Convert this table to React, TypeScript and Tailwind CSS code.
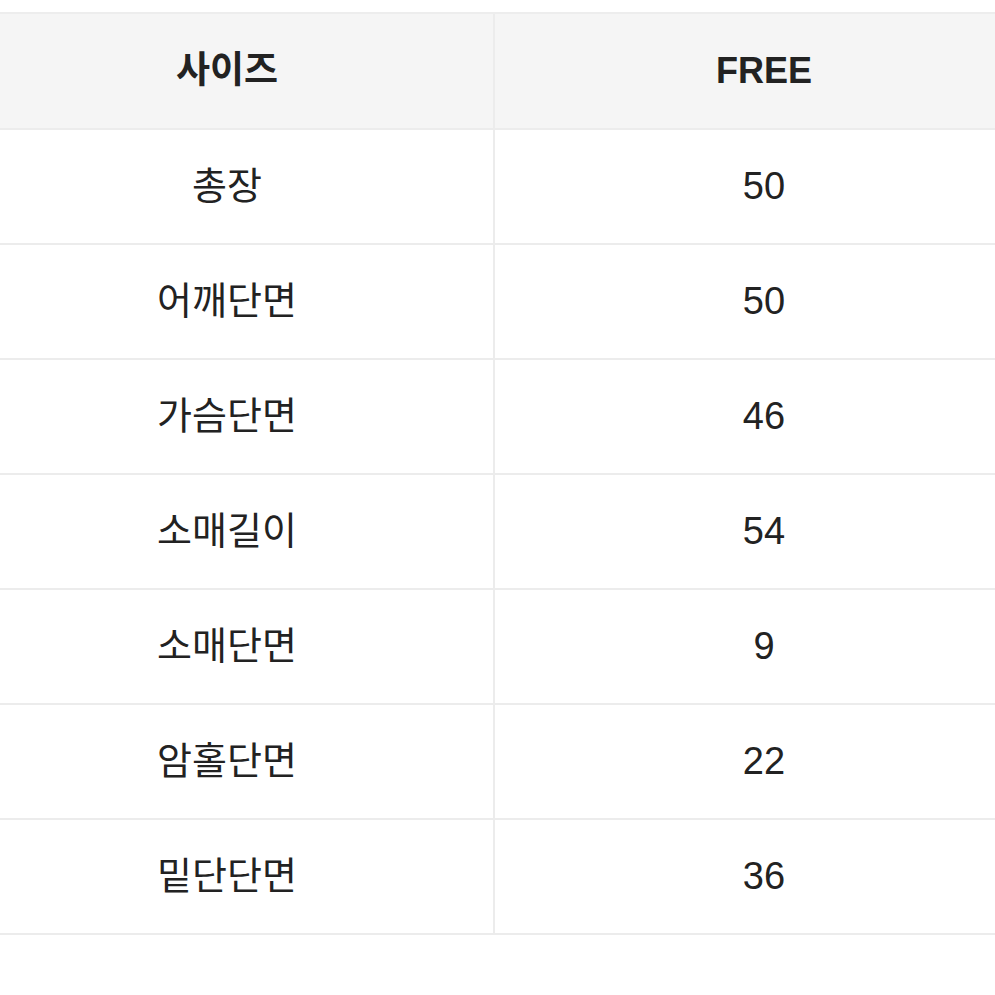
import React from "react";

const rows: [string, string][] = [
  ["총장", "50"],
  ["어깨단면", "50"],
  ["가슴단면", "46"],
  ["소매길이", "54"],
  ["소매단면", "9"],
  ["암홀단면", "22"],
  ["밑단단면", "36"],
];

const font = {
  fontFamily: '"Liberation Sans", "Noto Sans CJK KR", sans-serif',
};

export default function App() {
  return (
    <div className="w-[995px] h-[995px] bg-white overflow-hidden pt-[12px]" style={font}>
      <div className="ml-[-39px] w-[1072px] border-t-2 border-[#ededed] text-[#222222]">
        <div className="flex h-[116px] bg-[#f5f5f5] border-b-2 border-[#ececec]">
          <div className="w-[534px] flex items-center justify-center text-[37px] font-bold border-r-2 border-[#ececec]">
            사이즈
          </div>
          <div className="flex-1 flex items-center justify-center text-[36px] font-bold">
            FREE
          </div>
        </div>
        {rows.map(([k, v]) => (
          <div key={k} className="flex h-[115px] border-b-2 border-[#ececec]">
            <div className="w-[534px] flex items-center justify-center text-[38px] border-r-2 border-[#ececec]">
              {k}
            </div>
            <div className="flex-1 flex items-center justify-center text-[38px]">
              {v}
            </div>
          </div>
        ))}
      </div>
    </div>
  );
}
